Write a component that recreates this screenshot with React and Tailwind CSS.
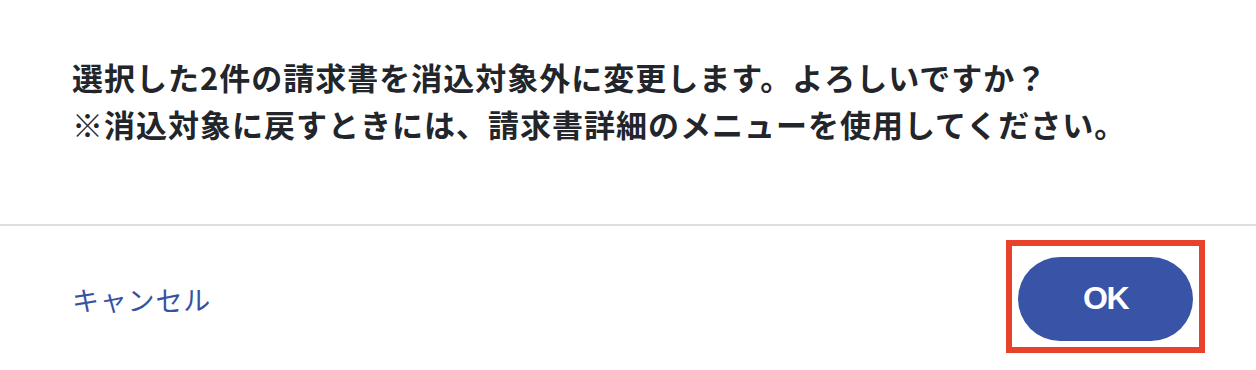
export default function App() {
  return (
    <div
      className="w-full h-[370px] bg-white flex flex-col overflow-hidden"
      style={{ fontFamily: '"Noto Sans CJK JP", "Noto Sans", sans-serif' }}
    >
      {/* ダイアログ本文 */}
      <div className="h-[224px] pl-[72px] pt-[53px] text-[#22252a] font-bold text-[31px] leading-[47px] tracking-[1px]">
        <p>選択した2件の請求書を消込対象外に変更します。よろしいですか？</p>
        <p>※消込対象に戻すときには、請求書詳細のメニューを使用してください。</p>
      </div>

      {/* フッター */}
      <div className="flex-1 border-t-2 border-[#dcdee4] flex items-start justify-between pl-[72px] pr-[51px]">
        <button className="mt-[54px] text-[#3552a3] text-[27px] tracking-[0.8px]">キャンセル</button>
        <div className="mt-[14px] border-[6px] border-[#e8432a] px-[6px] pt-[11px] pb-[6px]">
          <button
            className="w-[175px] h-[84px] pb-[2px] rounded-full bg-[#3953a6] text-white font-bold text-[32px] tracking-[-1.5px]"
            style={{ fontFamily: '"Liberation Sans", Arial, sans-serif' }}
          >
            OK
          </button>
        </div>
      </div>
    </div>
  );
}
